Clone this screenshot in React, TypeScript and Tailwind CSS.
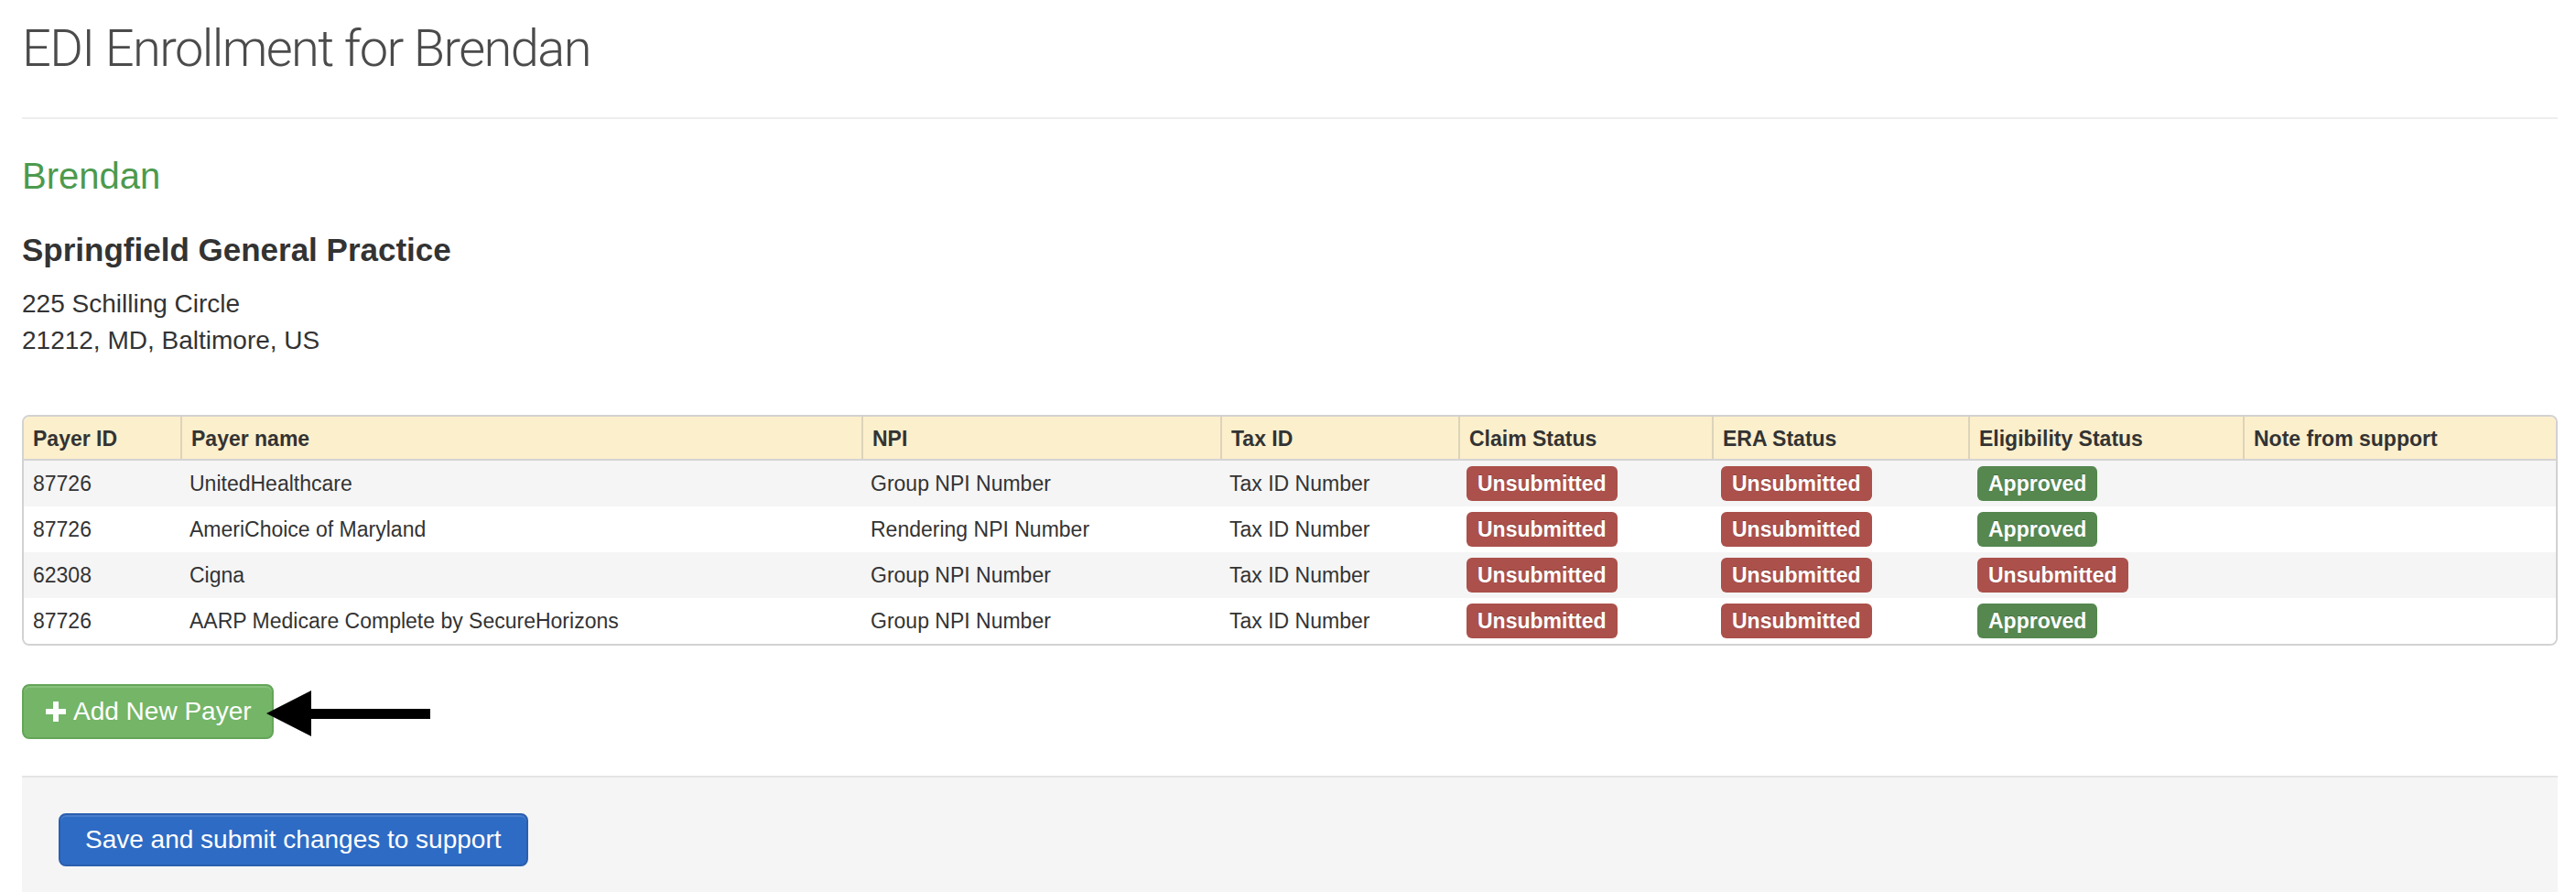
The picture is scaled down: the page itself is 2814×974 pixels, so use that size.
import React from "react";

type Status = "Unsubmitted" | "Approved";

const PAYERS: { id: string; name: string; npi: string; tax: string; claim: Status; era: Status; elig: Status }[] = [
  { id: "87726", name: "UnitedHealthcare", npi: "Group NPI Number", tax: "Tax ID Number", claim: "Unsubmitted", era: "Unsubmitted", elig: "Approved" },
  { id: "87726", name: "AmeriChoice of Maryland", npi: "Rendering NPI Number", tax: "Tax ID Number", claim: "Unsubmitted", era: "Unsubmitted", elig: "Approved" },
  { id: "62308", name: "Cigna", npi: "Group NPI Number", tax: "Tax ID Number", claim: "Unsubmitted", era: "Unsubmitted", elig: "Unsubmitted" },
  { id: "87726", name: "AARP Medicare Complete by SecureHorizons", npi: "Group NPI Number", tax: "Tax ID Number", claim: "Unsubmitted", era: "Unsubmitted", elig: "Approved" },
];

const HEADERS = ["Payer ID", "Payer name", "NPI", "Tax ID", "Claim Status", "ERA Status", "Eligibility Status", "Note from support"];

const COLS = "grid grid-cols-[171px_744px_392px_260px_277px_280px_300px_1fr]";

function Badge({ status }: { status: Status }) {
  const color = status === "Approved" ? "bg-[#55874f]" : "bg-[#ab504b]";
  return (
    <span className={`${color} inline-flex h-[38px] items-center rounded-[6px] px-[12px] text-[23px] font-bold text-white [text-shadow:0_-1px_0_rgba(0,0,0,0.2)]`}>
      {status}
    </span>
  );
}

export default function App() {
  return (
    <div className="min-h-screen bg-white pl-[24px] pr-[20px] font-['Liberation_Sans',Arial,sans-serif] text-[#333]">
      <h1 className="pt-[21px] font-['Roboto',sans-serif] text-[56px] font-light leading-[64px] tracking-[-1.6px] text-[#4b4b4b]">
        EDI Enrollment for Brendan
      </h1>
      <div className="mt-[43px] h-[2px] bg-[#eeeeee]" />

      <h2 className="mt-[40px] text-[40px] leading-[44px] text-[#4c9a4d]">Brendan</h2>
      <h3 className="mt-[39px] text-[35px] font-bold leading-[40px] text-[#333]">Springfield General Practice</h3>
      <div className="mt-[19px] text-[28px] leading-[40px]">
        <div>225 Schilling Circle</div>
        <div>21212, MD, Baltimore, US</div>
      </div>

      <div className="mt-[61px] overflow-hidden rounded-[8px] border-2 border-[#d2d2d2] text-[23px]">
        <div className={`${COLS} h-[48px] border-b-2 border-[#d4d4d4] bg-[#fcefcc] font-bold text-[#333]`}>
          {HEADERS.map((h, i) => (
            <div key={h} className={`flex items-center px-[10px] pt-[3px] ${i > 0 ? "border-l-2 border-[#ddd3ba]" : ""}`}>
              {h}
            </div>
          ))}
        </div>
        {PAYERS.map((p, i) => (
          <div key={i} className={`${COLS} h-[50px] ${i % 2 === 0 ? "bg-[#f5f5f5]" : "bg-white"}`}>
            <div className="flex items-center px-[10px]">{p.id}</div>
            <div className="flex items-center px-[10px]">{p.name}</div>
            <div className="flex items-center px-[10px]">{p.npi}</div>
            <div className="flex items-center px-[10px]">{p.tax}</div>
            <div className="flex items-center px-[9px]"><Badge status={p.claim} /></div>
            <div className="flex items-center px-[10px]"><Badge status={p.era} /></div>
            <div className="flex items-center px-[10px]"><Badge status={p.elig} /></div>
            <div className="flex items-center px-[10px]" />
          </div>
        ))}
      </div>

      <div className="relative mt-[42px] h-[60px]">
        <button className="flex h-[60px] items-center gap-[8px] rounded-[8px] border-2 border-[#64a558] bg-[#74b567] pl-[24px] pr-[22px] text-[28px] text-white shadow-[inset_0_2px_0_rgba(255,255,255,0.15)]">
          <svg width="22" height="22" viewBox="0 0 22 22" className="shrink-0">
            <path d="M8 0h6v8h8v6h-8v8H8v-8H0V8h8z" fill="white" />
          </svg>
          Add New Payer
        </button>
        <svg className="absolute left-[267px] top-[7px]" width="180" height="50" viewBox="0 0 180 50">
          <polygon points="0,25 49,0 49,20 179,20 179,31 49,31 49,50" fill="black" />
        </svg>
      </div>

      <div className="mt-[40px] border-t-2 border-[#e5e5e5] bg-[#f5f5f5] pb-[40px] pl-[40px] pt-[39px]">
        <button className="h-[58px] rounded-[8px] border-2 border-[#2a5faf] bg-[#2e6bc4] px-[27px] text-[28px] text-white shadow-[inset_0_2px_0_rgba(255,255,255,0.12)]">
          Save and submit changes to support
        </button>
      </div>
    </div>
  );
}
